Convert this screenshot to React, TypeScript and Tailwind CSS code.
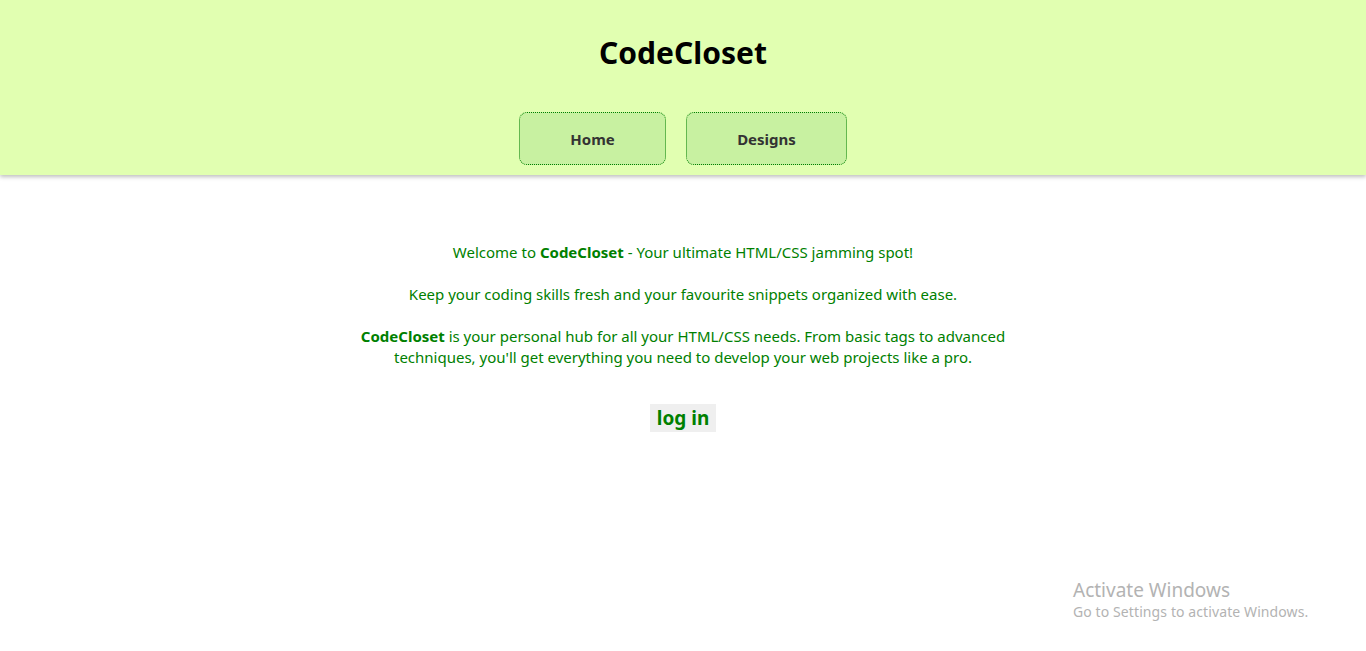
export default function App() {
  return (
    <div className="relative min-h-[651px] bg-white font-['Noto_Sans',sans-serif]">
      {/* Header */}
      <header className="flex h-[175px] flex-col items-center bg-[#e1ffb1] shadow-[0_2px_4px_rgba(0,0,0,0.25)]">
        <h1 className="mt-[33px] text-[30px] font-bold leading-[40px] text-black">CodeCloset</h1>
        <nav className="mt-[39px] flex gap-5">
          <a className="flex h-[53px] w-[147px] items-center justify-center rounded-lg border border-dotted border-[#008000] bg-[#c8f1a1] pt-[2px] text-[15px] font-bold text-[#333]">
            Home
          </a>
          <a className="flex h-[53px] w-[161px] items-center justify-center rounded-lg border border-dotted border-[#008000] bg-[#c8f1a1] pt-[2px] text-[15px] font-bold text-[#333]">
            Designs
          </a>
        </nav>
      </header>

      {/* Intro */}
      <main className="mx-auto mt-[67px] w-[700px] text-center text-[15px] leading-[21px] text-[#008000]">
        <p>
          Welcome to <b>CodeCloset</b> - Your ultimate HTML/CSS jamming spot!
        </p>
        <p className="mt-[21px]">
          Keep your coding skills fresh and your favourite snippets organized with ease.
        </p>
        <p className="mt-[21px]">
          <b>CodeCloset</b> is your personal hub for all your HTML/CSS needs. From basic tags to advanced
          techniques, you'll get everything you need to develop your web projects like a pro.
        </p>
        <button className="mt-[36px] bg-[#efefef] px-[7px] text-[19px] font-bold leading-[28px] text-[#008000]">
          log in
        </button>
      </main>

      {/* Watermark */}
      <div className="absolute left-[1073px] top-[578px] text-[#b3b3b3]">
        <div className="text-[19px] leading-[24px]">Activate Windows</div>
        <div className="text-[14px] leading-[20px] tracking-[0.1px]">Go to Settings to activate Windows.</div>
      </div>
    </div>
  );
}
